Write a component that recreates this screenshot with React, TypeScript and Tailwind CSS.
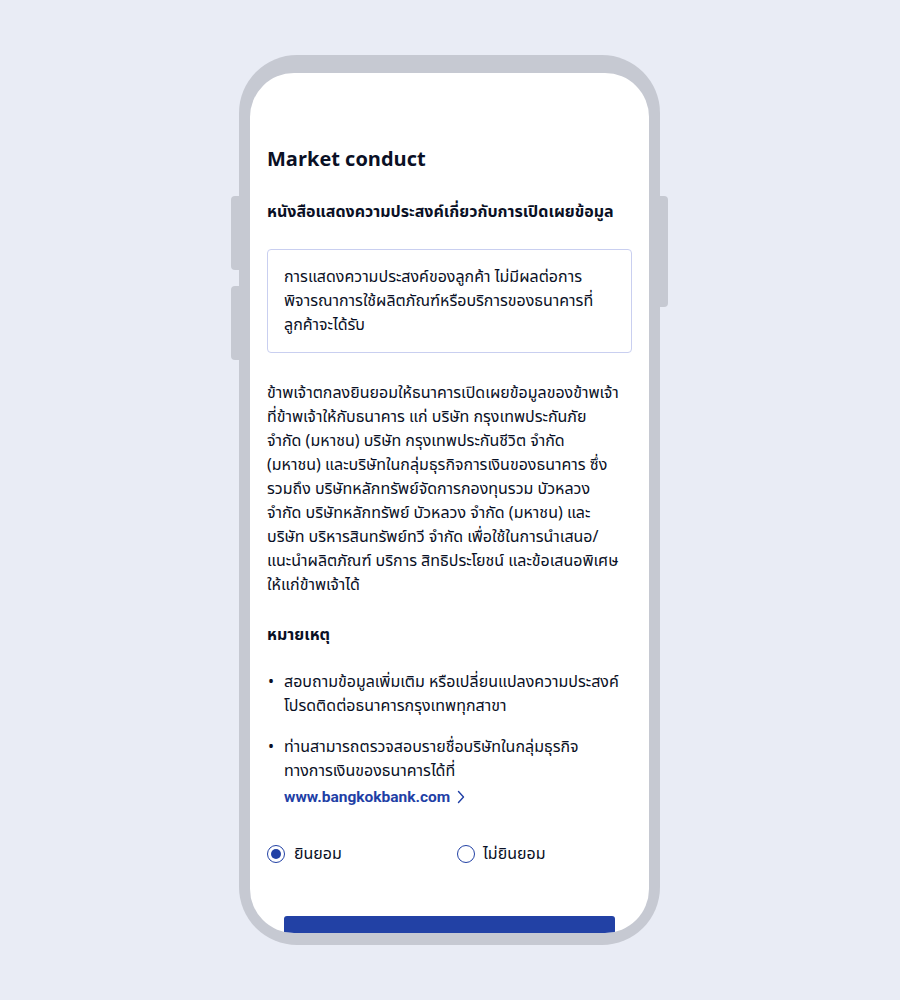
import React from "react";

const font = { fontFamily: '"Noto Sans Thai", "Noto Sans", "Noto Sans CJK SC", sans-serif' };

const bodyLines = [
  "ข้าพเจ้าตกลงยินยอมให้ธนาคารเปิดเผยข้อมูลของข้าพเจ้า",
  "ที่ข้าพเจ้าให้กับธนาคาร แก่ บริษัท กรุงเทพประกันภัย",
  "จำกัด (มหาชน) บริษัท กรุงเทพประกันชีวิต จำกัด",
  "(มหาชน) และบริษัทในกลุ่มธุรกิจการเงินของธนาคาร ซึ่ง",
  "รวมถึง บริษัทหลักทรัพย์จัดการกองทุนรวม บัวหลวง",
  "จำกัด บริษัทหลักทรัพย์ บัวหลวง จำกัด (มหาชน) และ",
  "บริษัท บริหารสินทรัพย์ทวี จำกัด เพื่อใช้ในการนำเสนอ/",
  "แนะนำผลิตภัณฑ์ บริการ สิทธิประโยชน์ และข้อเสนอพิเศษ",
  "ให้แก่ข้าพเจ้าได้",
];

export default function App() {
  return (
    <div className="min-h-[1000px] w-full bg-[#e9ecf5] pt-[55px]" style={font}>
      <div className="relative ml-[239px] w-[421px]">
        {/* side buttons */}
        <div className="absolute left-[-8px] top-[141px] h-[74px] w-[10px] rounded-l-[4px] bg-[#c6c9d2]" />
        <div className="absolute left-[-8px] top-[231px] h-[74px] w-[10px] rounded-l-[4px] bg-[#c6c9d2]" />
        <div className="absolute right-[-8px] top-[141px] h-[111px] w-[10px] rounded-r-[4px] bg-[#c6c9d2]" />
        <div className="relative rounded-[58px] bg-[#c6c9d2] px-[11px] pb-[12px] pt-[18px]">
          <div className="h-[860px] overflow-hidden rounded-[44px] bg-white">
            <div className="px-[17px] pt-[73px] text-[#0a1025]">
              <h1 className="text-[20px] font-bold leading-[28px]">Market conduct</h1>
              <h2 className="mt-[26px] text-[16px] font-bold leading-[24px]">
                หนังสือแสดงความประสงค์เกี่ยวกับการเปิดเผยข้อมูล
              </h2>
              <div className="mt-[25px] rounded-[4px] border border-[#c9cff0] px-[16px] py-[15px] text-[16px] leading-[24px]">
                <div className="whitespace-nowrap">การแสดงความประสงค์ของลูกค้า ไม่มีผลต่อการ</div>
                <div className="whitespace-nowrap">พิจารณาการใช้ผลิตภัณฑ์หรือบริการของธนาคารที่</div>
                <div className="whitespace-nowrap">ลูกค้าจะได้รับ</div>
              </div>
              <div className="mt-[28px] text-[16px] leading-[24px]">
                {bodyLines.map((l) => (
                  <div key={l} className="whitespace-nowrap">
                    {l}
                  </div>
                ))}
              </div>
              <h3 className="mt-[26px] text-[16px] font-bold leading-[24px]">หมายเหตุ</h3>
              <ul className="mt-[23px] flex flex-col gap-[17px] text-[16px] leading-[24px]">
                <li className="flex">
                  <span className="w-[17px] shrink-0 pl-[1px]">•</span>
                  <div>
                    <div className="whitespace-nowrap">สอบถามข้อมูลเพิ่มเติม หรือเปลี่ยนแปลงความประสงค์</div>
                    <div className="whitespace-nowrap">โปรดติดต่อธนาคารกรุงเทพทุกสาขา</div>
                  </div>
                </li>
                <li className="flex">
                  <span className="w-[17px] shrink-0 pl-[1px]">•</span>
                  <div>
                    <div className="whitespace-nowrap">ท่านสามารถตรวจสอบรายชื่อบริษัทในกลุ่มธุรกิจ</div>
                    <div className="whitespace-nowrap">ทางการเงินของธนาคารได้ที่</div>
                    <a
                      className="mt-[2px] flex items-center gap-[7px] text-[15.5px] font-bold text-[#1f3fa6]"
                      style={{ fontFamily: 'Roboto, "Noto Sans", sans-serif' }}
                    >
                      www.bangkokbank.com
                      <svg width="8" height="14" viewBox="0 0 8 14" fill="none">
                        <path d="M1.5 1.5L6.5 7L1.5 12.5" stroke="#1f3fa6" strokeWidth="1.4" strokeLinecap="round" strokeLinejoin="round" />
                      </svg>
                    </a>
                  </div>
                </li>
              </ul>
              <div className="mt-[33px] grid grid-cols-[190px_1fr] text-[16px] leading-[24px]">
                <label className="flex items-center gap-[9px]">
                  <span className="flex h-[18px] w-[18px] items-center justify-center rounded-full border-[1.5px] border-[#2241a5]">
                    <span className="h-[10px] w-[10px] rounded-full bg-[#2241a5]" />
                  </span>
                  ยินยอม
                </label>
                <label className="flex items-center gap-[8px]">
                  <span className="h-[18px] w-[18px] rounded-full border-[1.5px] border-[#2241a5]" />
                  ไม่ยินยอม
                </label>
              </div>
              <div className="mt-[50px] px-[17px]">
                <button className="flex h-[50px] w-full items-center justify-center rounded-[3px] bg-[#2241a5] text-[16px] font-bold text-white">
                  ยืนยัน
                </button>
              </div>
            </div>
          </div>
        </div>
      </div>
    </div>
  );
}
